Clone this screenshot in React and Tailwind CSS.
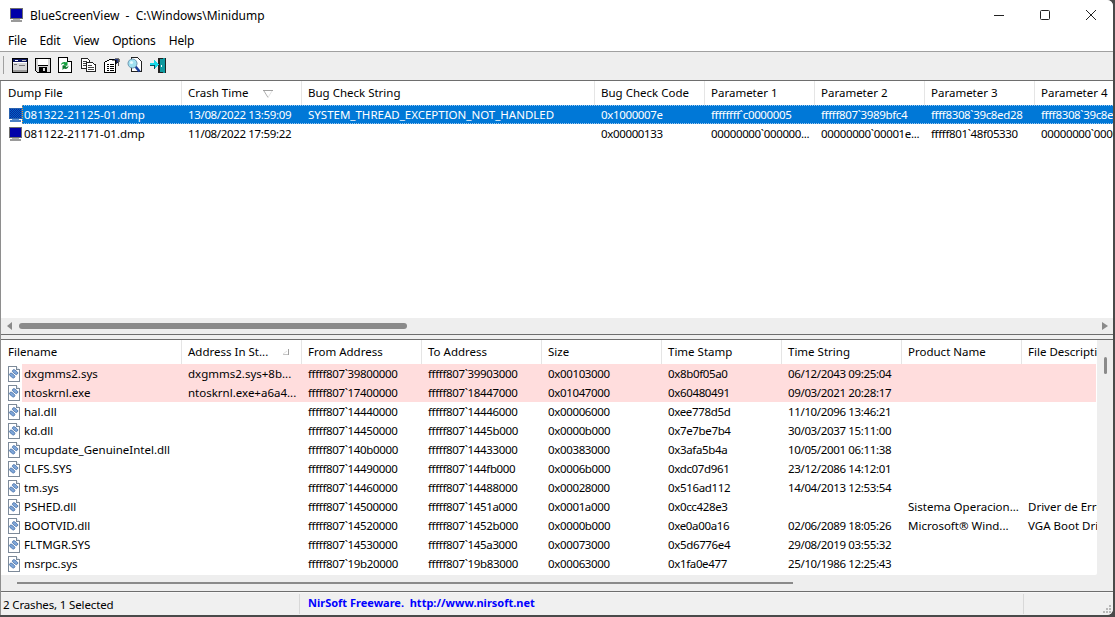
import React from "react";

const topCols = "grid grid-cols-[181px_120px_293px_110px_110px_110px_110px_110px] w-[1154px]";
const botCols = "grid grid-cols-[181px_120px_120px_120px_120px_120px_120px_120px_120px] w-[1201px]";

const topHead = ["Dump File", "Crash Time", "Bug Check String", "Bug Check Code", "Parameter 1", "Parameter 2", "Parameter 3", "Parameter 4"];
const topRows = [
  ["081322-21125-01.dmp", "13/08/2022 13:59:09", "SYSTEM_THREAD_EXCEPTION_NOT_HANDLED", "0x1000007e", "ffffffff`c0000005", "fffff807`3989bfc4", "ffff8308`39c8ed28", "ffff8308`39c8ed28"],
  ["081122-21171-01.dmp", "11/08/2022 17:59:22", "", "0x00000133", "00000000`000000...", "00000000`00001e...", "fffff801`48f05330", "00000000`00000000"],
];

const botHead = ["Filename", "Address In St...", "From Address", "To Address", "Size", "Time Stamp", "Time String", "Product Name", "File Description"];
const botRows = [
  ["dxgmms2.sys", "dxgmms2.sys+8b...", "fffff807`39800000", "fffff807`39903000", "0x00103000", "0x8b0f05a0", "06/12/2043 09:25:04", "", ""],
  ["ntoskrnl.exe", "ntoskrnl.exe+a6a4...", "fffff807`17400000", "fffff807`18447000", "0x01047000", "0x60480491", "09/03/2021 20:28:17", "", ""],
  ["hal.dll", "", "fffff807`14440000", "fffff807`14446000", "0x00006000", "0xee778d5d", "11/10/2096 13:46:21", "", ""],
  ["kd.dll", "", "fffff807`14450000", "fffff807`1445b000", "0x0000b000", "0x7e7be7b4", "30/03/2037 15:11:00", "", ""],
  ["mcupdate_GenuineIntel.dll", "", "fffff807`140b0000", "fffff807`14433000", "0x00383000", "0x3afa5b4a", "10/05/2001 06:11:38", "", ""],
  ["CLFS.SYS", "", "fffff807`14490000", "fffff807`144fb000", "0x0006b000", "0xdc07d961", "23/12/2086 14:12:01", "", ""],
  ["tm.sys", "", "fffff807`14460000", "fffff807`14488000", "0x00028000", "0x516ad112", "14/04/2013 12:53:54", "", ""],
  ["PSHED.dll", "", "fffff807`14500000", "fffff807`1451a000", "0x0001a000", "0x0cc428e3", "", "Sistema Operacion...", "Driver de Erro"],
  ["BOOTVID.dll", "", "fffff807`14520000", "fffff807`1452b000", "0x0000b000", "0xe0a00a16", "02/06/2089 18:05:26", "Microsoft® Wind...", "VGA Boot Dri"],
  ["FLTMGR.SYS", "", "fffff807`14530000", "fffff807`145a3000", "0x00073000", "0x5d6776e4", "29/08/2019 03:55:32", "", ""],
  ["msrpc.sys", "", "fffff807`19b20000", "fffff807`19b83000", "0x00063000", "0x1fa0e477", "25/10/1986 12:25:43", "", ""],
];

// columns holding hex / dates, squeezed a little to fit the column like the original font
const topNumeric = [1, 3, 4, 5, 6, 7];
const botNumeric = [2, 3, 4, 5, 6];

function MonitorIcon({ selected }) {
  return (
    <svg width="16" height="16" viewBox="0 0 16 16" shapeRendering="crispEdges">
      <defs>
        <pattern id="dither" width="2" height="2" patternUnits="userSpaceOnUse">
          <rect width="2" height="2" fill="#0060c8" />
          <rect width="1" height="1" fill="#0a2a9a" />
          <rect x="1" y="1" width="1" height="1" fill="#0a2a9a" />
        </pattern>
      </defs>
      <rect x="1" y="1" width="13" height="11" fill={selected ? "#2a62ae" : "#6e6e6e"} />
      <rect x="2" y="2" width="11" height="9" fill={selected ? "url(#dither)" : "#0000a8"} />
      <rect x="4" y="12" width="7" height="1" fill={selected ? "#5b90d4" : "#b0b0b0"} />
      <rect x="2" y="13" width="11" height="2" fill={selected ? "#4a80c4" : "#9a9a9a"} />
    </svg>
  );
}

function ModuleIcon() {
  return (
    <svg width="16" height="16" viewBox="0 0 16 16">
      <path d="M2.5 0.5H10.5L13.5 3.5V15.5H2.5Z" fill="#fff" stroke="#7d8a99" shapeRendering="crispEdges" />
      <path d="M10.5 0.5V3.5H13.5" fill="#dfe6ee" stroke="#7d8a99" shapeRendering="crispEdges" />
      <g transform="rotate(40 7.5 8)">
        <rect x="4.5" y="4" width="6" height="3" rx="1.4" fill="#7fa6d8" stroke="#2e5a96" strokeWidth="0.6" />
        <rect x="4.5" y="8.5" width="6" height="3" rx="1.4" fill="#7fa6d8" stroke="#2e5a96" strokeWidth="0.6" />
      </g>
    </svg>
  );
}

function AppWindowTool() {
  return (
    <svg width="16" height="15" viewBox="0 0 16 15" shapeRendering="crispEdges">
      <rect x="0.5" y="0.5" width="15" height="14" fill="#d8d8d8" stroke="#000" />
      <rect x="1" y="1" width="14" height="3" fill="#101860" />
      <rect x="3" y="2" width="3" height="1" fill="#fff" />
      <rect x="10" y="2" width="4" height="1" fill="#c0c0c0" />
      <rect x="1" y="4" width="14" height="1" fill="#fff" />
      <rect x="2" y="6" width="3" height="1" fill="#777" />
      <rect x="7" y="7" width="6" height="1" fill="#777" />
      <rect x="1" y="12" width="14" height="2" fill="#9a9a9a" />
    </svg>
  );
}

function SaveTool() {
  return (
    <svg width="16" height="15" viewBox="0 0 16 15" shapeRendering="crispEdges">
      <path d="M0.5 0.5H15.5V14.5H2.5L0.5 12.5Z" fill="#d8d8d8" stroke="#000" />
      <rect x="3" y="1" width="10" height="6" fill="#fff" />
      <rect x="3" y="7" width="10" height="1" fill="#000" />
      <rect x="4" y="9" width="8" height="5" fill="#000" />
      <rect x="8" y="10" width="2" height="3" fill="#d8d8d8" />
    </svg>
  );
}

function RefreshTool() {
  return (
    <svg width="14" height="16" viewBox="0 0 14 16">
      <path d="M0.5 0.5H9.5L13.5 4.5V15.5H0.5Z" fill="#fff" stroke="#000" shapeRendering="crispEdges" />
      <path d="M9.5 0.5V4.5H13.5" fill="#e8e8e8" stroke="#000" shapeRendering="crispEdges" />
      <path d="M3 8C3 5.5 6 4.5 8 5.5L9.5 4V8.5H5L6.5 7C5.5 6.6 4 7 3 8Z" fill="#12a03c" />
      <path d="M10.5 8.5C10.5 11.5 8 12.5 6 11.5L4.5 13V8.5H9L7.5 10C8.5 10.5 9.5 10 10.5 8.5Z" fill="#0b7a2c" />
    </svg>
  );
}

function CopyTool() {
  return (
    <svg width="15" height="14" viewBox="0 0 15 14" shapeRendering="crispEdges">
      <path d="M0.5 0.5H6.5L8.5 2.5V10.5H0.5Z" fill="#fff" stroke="#222" />
      <path d="M2 3H6M2 5H7M2 7H6" stroke="#444" />
      <path d="M5.5 4.5H11.5L14.5 7V13.5H5.5Z" fill="#fff" stroke="#222" />
      <path d="M7 7H11M7 9H13M7 11H13" stroke="#444" />
    </svg>
  );
}

function PropsTool() {
  return (
    <svg width="16" height="15" viewBox="0 0 16 15" shapeRendering="crispEdges">
      <path d="M0.5 4.5L5.5 1.5H11.5V14.5H0.5Z" fill="#fff" stroke="#000" />
      <path d="M3 6H5M6 6H10M3 8H5M6 8H10M3 10H5M6 10H10M3 12H5M6 12H10" stroke="#000" />
      <path d="M8 2L13 0.5H15V4L12 5.5V2Z" fill="#2a3c80" stroke="#000" strokeWidth="0.5" />
      <rect x="14" y="1" width="1" height="7" fill="#555" />
    </svg>
  );
}

function FindTool() {
  return (
    <svg width="15" height="16" viewBox="0 0 15 16">
      <path d="M4.5 0.5H10.5L14.5 4.5V14.5H4.5Z" fill="#fff" stroke="#222" shapeRendering="crispEdges" />
      <path d="M8.5 9.5L12.5 14.5" stroke="#1b3f9c" strokeWidth="2.6" />
      <circle cx="5.5" cy="6.5" r="4.5" fill="#a0e0f0" stroke="#6e96b0" />
      <circle cx="4.5" cy="5.5" r="1.6" fill="#e8fbff" />
    </svg>
  );
}

function ExitTool() {
  return (
    <svg width="16" height="15" viewBox="0 0 16 15" shapeRendering="crispEdges">
      <path d="M8 0H16V15H8Z" fill="#222" />
      <path d="M10 1.5L15 0V15L10 13.5Z" fill="#109aa0" />
      <rect x="11" y="7" width="1" height="2" fill="#fff" />
      <path d="M0 5H4V2L8.5 6.5L4 11V8H0Z" fill="#18d8e8" />
      <path d="M0 8H4V11L5 10V7H0Z" fill="#0a5060" />
    </svg>
  );
}

function SortGlyph({ up }) {
  return up ? (
    <svg width="10" height="8" viewBox="0 0 10 8" className="absolute left-[81px] top-[9px]">
      <path d="M0 0.5H10" stroke="#a0a0a0" />
      <path d="M1 1L5 7.5" stroke="#b0b0b0" />
      <path d="M9 1L5 7.5" stroke="#e4e4e4" />
    </svg>
  ) : (
    <svg width="6" height="6" viewBox="0 0 6 6" className="absolute left-[101px] top-[9px]">
      <path d="M0 5.5H6" stroke="#c4c4c4" />
      <path d="M5.5 0V6" stroke="#a0a0a0" />
      <path d="M0 5L4 2" stroke="#e0e0e0" />
    </svg>
  );
}

function HeaderRow({ cols, labels, sortAt, up }) {
  return (
    <div className={`${cols} h-[24px] bg-white`}>
      {labels.map((l, i) => (
        <div key={l} className={`relative border-r border-[#e5e5e5] pt-[4px] last:border-r-0 overflow-hidden whitespace-nowrap text-[#000] ${i === 0 ? "pl-[7px]" : "pl-[6px]"}`}>
          {l}
          {i === sortAt && <SortGlyph up={up} />}
        </div>
      ))}
    </div>
  );
}

function DataCell({ children, selected, numeric }) {
  return (
    <div className={`pl-[6px] overflow-hidden whitespace-nowrap ${numeric ? "tracking-[-0.35px]" : ""} ${selected ? "text-white" : "text-[#000]"}`}>
      {children}
    </div>
  );
}

function HScroll({ thumb, arrows }) {
  return (
    <div className="h-[16px] bg-[#eeeeee] flex items-center shrink-0">
      {arrows && <span className="ml-[6px] w-0 h-0 border-y-[4px] border-y-transparent border-r-[5px] border-r-[#8a8a8a]" />}
      <div className={thumb} />
      {arrows && <span className="ml-auto mr-[5px] w-0 h-0 border-y-[4px] border-y-transparent border-l-[6px] border-l-[#8a8a8a]" />}
    </div>
  );
}

const tools = [AppWindowTool, SaveTool, RefreshTool, CopyTool, PropsTool, FindTool, ExitTool];

export default function App() {
  return (
    <div className="w-[1115px] h-[617px] overflow-hidden bg-[#4a4a4a] font-['Segoe_UI','Noto_Sans',sans-serif] text-[11.5px] leading-[16px]">
      <div className="w-[1113px] h-[615px] bg-[#f0f0f0] rounded-tr-[6px] rounded-br-[6px] flex flex-col overflow-hidden">
        {/* title bar */}
        <div className="h-[30px] shrink-0 bg-white flex items-center pl-[9px]">
          <MonitorIcon />
          <span className="ml-[5px] pt-[1px] text-[12px] whitespace-pre text-[#000]">BlueScreenView  -  C:\Windows\Minidump</span>
          <div className="ml-auto flex items-center">
            <div className="w-[46px] flex justify-center">
              <svg width="10" height="10" viewBox="0 0 10 10"><path d="M0 5.5H10" stroke="#222" /></svg>
            </div>
            <div className="w-[46px] flex justify-center">
              <svg width="10" height="10" viewBox="0 0 10 10"><rect x="0.5" y="0.5" width="9" height="9" rx="1" fill="none" stroke="#222" /></svg>
            </div>
            <div className="w-[45px] flex justify-center">
              <svg width="10" height="10" viewBox="0 0 10 10"><path d="M0 0L10 10M10 0L0 10" stroke="#222" /></svg>
            </div>
          </div>
        </div>

        {/* menu */}
        <div className="h-[21px] shrink-0 bg-white flex items-start pl-[8px] gap-[13px] text-[#000] pt-[3px] text-[12px] tracking-[-0.15px]">
          <span>File</span><span>Edit</span><span>View</span><span>Options</span><span>Help</span>
        </div>
        <div className="h-[1px] shrink-0 bg-[#a0a0a0]" />

        {/* toolbar */}
        <div className="h-[29px] shrink-0 bg-[#eeeeee] flex items-center pl-[3px] pb-[2px] border-b border-[#6e6e6e]">
          <div className="w-[1px] h-[18px] bg-[#a0a0a0] mr-[8px]" />
          {tools.map((Tool, i) => (
            <div key={i} className="w-[23px] flex items-center">
              <Tool />
            </div>
          ))}
        </div>

        <div className="flex-1 flex flex-col min-h-0 border-l border-l-[#8e8e8e]">
          {/* crash list */}
          <div className="h-[237px] shrink-0 bg-white overflow-hidden">
            <HeaderRow cols={topCols} labels={topHead} sortAt={1} up />
            {topRows.map((r, ri) => (
              <div key={r[0]} className={`${topCols} h-[19px] items-center relative`}>
                {ri === 0 && <div className="absolute left-[21px] top-0 bottom-0 w-[1133px] bg-[#0078d7] border border-dotted border-[#9cc8ee] border-l-[#e8903a]" />}
                {r.map((c, i) => (
                  <div key={i} className={`relative ${i === 0 ? "flex items-center pl-[7px]" : ""}`}>
                    {i === 0 && <MonitorIcon selected={ri === 0} />}
                    {i === 0 ? (
                      <span className={ri === 0 ? "text-white" : "text-[#000]"}>{c}</span>
                    ) : (
                      <DataCell selected={ri === 0} numeric={topNumeric.includes(i)}>{c}</DataCell>
                    )}
                  </div>
                ))}
              </div>
            ))}
          </div>
          <HScroll thumb="ml-[7px] w-[388px] h-[6px] rounded-full bg-[#8a8a8a]" arrows />
          <div className="h-[1px] shrink-0 bg-[#6e6e6e]" />
          <div className="h-[4px] shrink-0 bg-[#f0f0f0]" />
          <div className="h-[1px] shrink-0 bg-[#6e6e6e]" />

          {/* modules list */}
          <div className="h-[235px] shrink-0 flex overflow-hidden">
            <div className="w-[1096px] shrink-0 bg-white overflow-hidden rounded-br-[2px]">
              <HeaderRow cols={botCols} labels={botHead} sortAt={1} />
              {botRows.map((r, ri) => (
                <div key={r[0]} className={`${botCols} h-[19px] items-center relative`}>
                  {ri < 2 && <div className="absolute left-[21px] top-0 bottom-0 w-[1074px] bg-[#ffdddd]" />}
                  {r.map((c, i) => (
                    <div key={i} className={`relative ${i === 0 ? "flex items-center pl-[5px] gap-[2px]" : ""}`}>
                      {i === 0 && <ModuleIcon />}
                      {i === 0 ? <span className="text-[#000]">{c}</span> : <DataCell numeric={botNumeric.includes(i)}>{c}</DataCell>}
                    </div>
                  ))}
                </div>
              ))}
            </div>
            <div className="w-[16px] bg-[#eeeeee] flex justify-center pt-[17px]">
              <div className="w-[3px] h-[17px] rounded-full bg-[#8a8a8a]" />
            </div>
          </div>
          <HScroll thumb="ml-[16px] w-[776px] h-[2px] bg-[#8a8a8a]" />
          <div className="h-[1px] shrink-0 bg-[#6e6e6e]" />

          {/* status bar */}
          <div className="flex-1 bg-[#f0f0f0] border-t border-t-[#f8f8f8] flex items-center relative">
            <div className="w-[299px] h-[20px] border-r border-[#d8d8d8] pl-[2px] pt-[3px] text-[#000] tracking-[-0.15px]">2 Crashes, 1 Selected</div>
            <div className="w-[724px] h-[20px] border-r border-[#d8d8d8] pl-[8px] pt-[1px] font-['Liberation_Sans',sans-serif] font-bold text-[11px] text-[#0000ff] whitespace-pre">NirSoft Freeware.  http://www.nirsoft.net</div>
            <svg width="10" height="10" viewBox="0 0 10 10" className="absolute right-[1px] bottom-[1px]" shapeRendering="crispEdges">
              <path d="M7 1h2v2H7zM4 4h2v2H4zM7 4h2v2H7zM1 7h2v2H1zM4 7h2v2H4zM7 7h2v2H7z" fill="#b8b8b8" />
            </svg>
          </div>
        </div>
      </div>
    </div>
  );
}
